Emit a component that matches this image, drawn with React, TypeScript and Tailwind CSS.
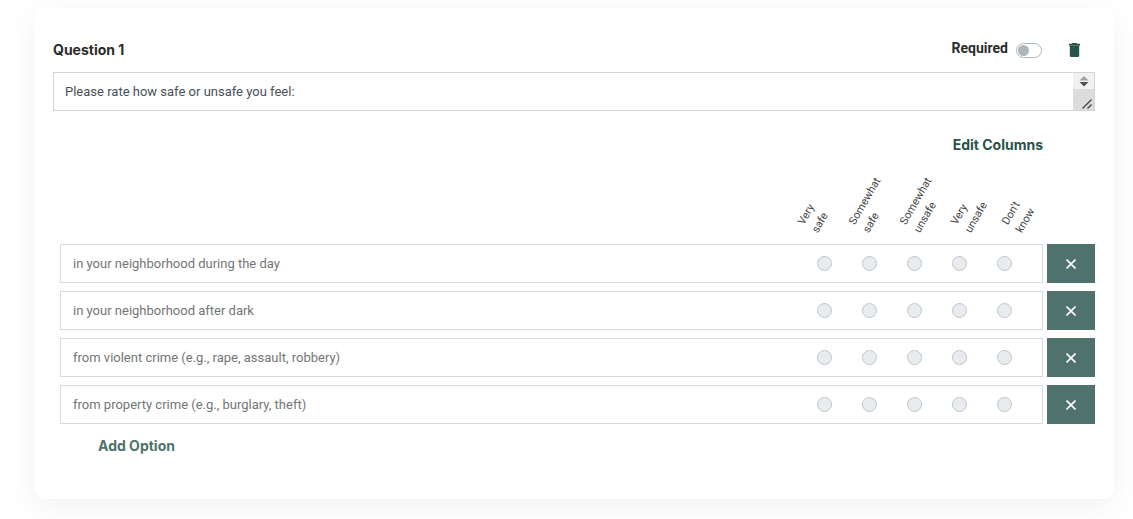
import React from "react";

const columns = [
  ["Very", "safe"],
  ["Somewhat", "safe"],
  ["Somewhat", "unsafe"],
  ["Very", "unsafe"],
  ["Don't", "know"],
];

const options = [
  "in your neighborhood during the day",
  "in your neighborhood after dark",
  "from violent crime (e.g., rape, assault, robbery)",
  "from property crime (e.g., burglary, theft)",
];

function TrashIcon() {
  return (
    <svg width="12" height="14" viewBox="0 0 12 14" fill="#26534a" aria-hidden="true">
      <path d="M3.500 0h4l.8.8h2.700v1.700H0V.8h2.700z" />
      <path d="M.8 3.100h9.400v9.400a1.500 1.500 0 0 1-1.500 1.500H2.300a1.500 1.500 0 0 1-1.500-1.500z" />
      <path d="M.8 2.400h9.400v1H.8z" />
    </svg>
  );
}

function ScrollGrip() {
  return (
    <svg width="21" height="37" viewBox="0 0 21 37" className="shrink-0" aria-hidden="true">
      <rect width="21" height="16" fill="#f1f1f1" />
      <rect y="16" width="21" height="21" fill="#dcdcdc" />
      <path d="M6.500 7.500 11 3l4.500 4.500z" fill="#a3a3a3" />
      <path d="M6.500 9h9L11 13.500z" fill="#505050" />
      <path d="M9.500 35.500l9-9M14.500 35.500l4-4" stroke="#404040" strokeWidth="1.300" />
    </svg>
  );
}

function OptionRow({ text, index }: { text: string; index: number }) {
  return (
    <div className="flex gap-1">
      <div className="flex h-[39px] min-w-0 flex-1 items-center border border-[#d5dade] pl-3 pr-[30px]">
        <input
          type="text"
          aria-label={`Option ${index + 1}`}
          placeholder={text}
          className="min-w-0 flex-1 font-['Roboto',sans-serif] text-[13px] leading-5 outline-none placeholder:text-[#757575]"
        />
        <div className="flex gap-[30px]">
          {columns.map((column) => (
            <input
              key={column.join(" ")}
              type="radio"
              name={`option-${index}`}
              aria-label={column.join(" ")}
              className="size-[15px] appearance-none rounded-full border border-[#c0c5cc] bg-[#e9ecef] checked:bg-[#26534a]"
            />
          ))}
        </div>
      </div>
      <button
        type="button"
        aria-label="Remove option"
        className="flex w-12 items-center justify-center bg-[#4f736c] text-white"
      >
        <svg width="10" height="10" viewBox="0 0 10 10" stroke="currentColor" strokeWidth="1.600" aria-hidden="true">
          <path d="M0.500 0.500l9 9M9.500 0.500l-9 9" />
        </svg>
      </button>
    </div>
  );
}

export default function App() {
  return (
    <main className="pt-2 pr-[19px] pb-5 pl-[34px] font-['Inter',sans-serif] text-[#444]">
      <section className="rounded-xl bg-white px-[19px] pt-8 pb-[42px] shadow-[0_8px_32px_rgba(0,0,0,0.06)]">
        <div className="flex items-center justify-between pr-[13px]">
          <h2 className="text-sm leading-5 font-bold text-[#2b2b2b]">Question 1</h2>
          <div className="flex items-center">
            <label htmlFor="required" className="pb-1 font-['Roboto',sans-serif] text-sm leading-4 font-bold text-[#2b2b2b]">
              Required
            </label>
            <input
              id="required"
              type="checkbox"
              role="switch"
              className="ml-2 flex h-[15px] w-[26px] appearance-none items-center rounded-full border border-[#adb5bd] bg-white px-px before:size-[11px] before:rounded-full before:bg-[#adb5bd] checked:justify-end"
            />
            <button type="button" aria-label="Delete question" className="ml-[26px] p-px">
              <TrashIcon />
            </button>
          </div>
        </div>

        <div className="mt-3 flex border border-[#ced4da]">
          <textarea
            aria-label="Question text"
            rows={1}
            defaultValue="Please rate how safe or unsafe you feel:"
            className="h-[37px] min-w-0 flex-1 resize-none overflow-hidden px-[11px] py-[9px] font-['Roboto',sans-serif] text-[13px] leading-5 text-[#495057] outline-none"
          />
          <ScrollGrip />
        </div>

        <div className="mt-6 flex justify-end pr-[52px]">
          <button type="button" className="text-sm leading-5 font-bold text-[#26534a]">
            Edit Columns
          </button>
        </div>

        <div className="mt-[49px] flex justify-end pr-[18px] font-['Roboto',sans-serif]">
          {columns.map(([first, second]) => (
            <div
              key={first + second}
              className="w-[51px] origin-bottom-left -rotate-60 text-[11px] leading-4 whitespace-nowrap"
            >
              {first}
              <br />
              {second}
            </div>
          ))}
        </div>

        <div className="mt-2 flex flex-col gap-2 pl-[7px]">
          {options.map((option, index) => (
            <OptionRow key={option} text={option} index={index} />
          ))}
        </div>

        <button type="button" className="mt-3 ml-[45px] text-sm leading-5 font-bold text-[#4f736c]">
          Add Option
        </button>
      </section>
    </main>
  );
}
